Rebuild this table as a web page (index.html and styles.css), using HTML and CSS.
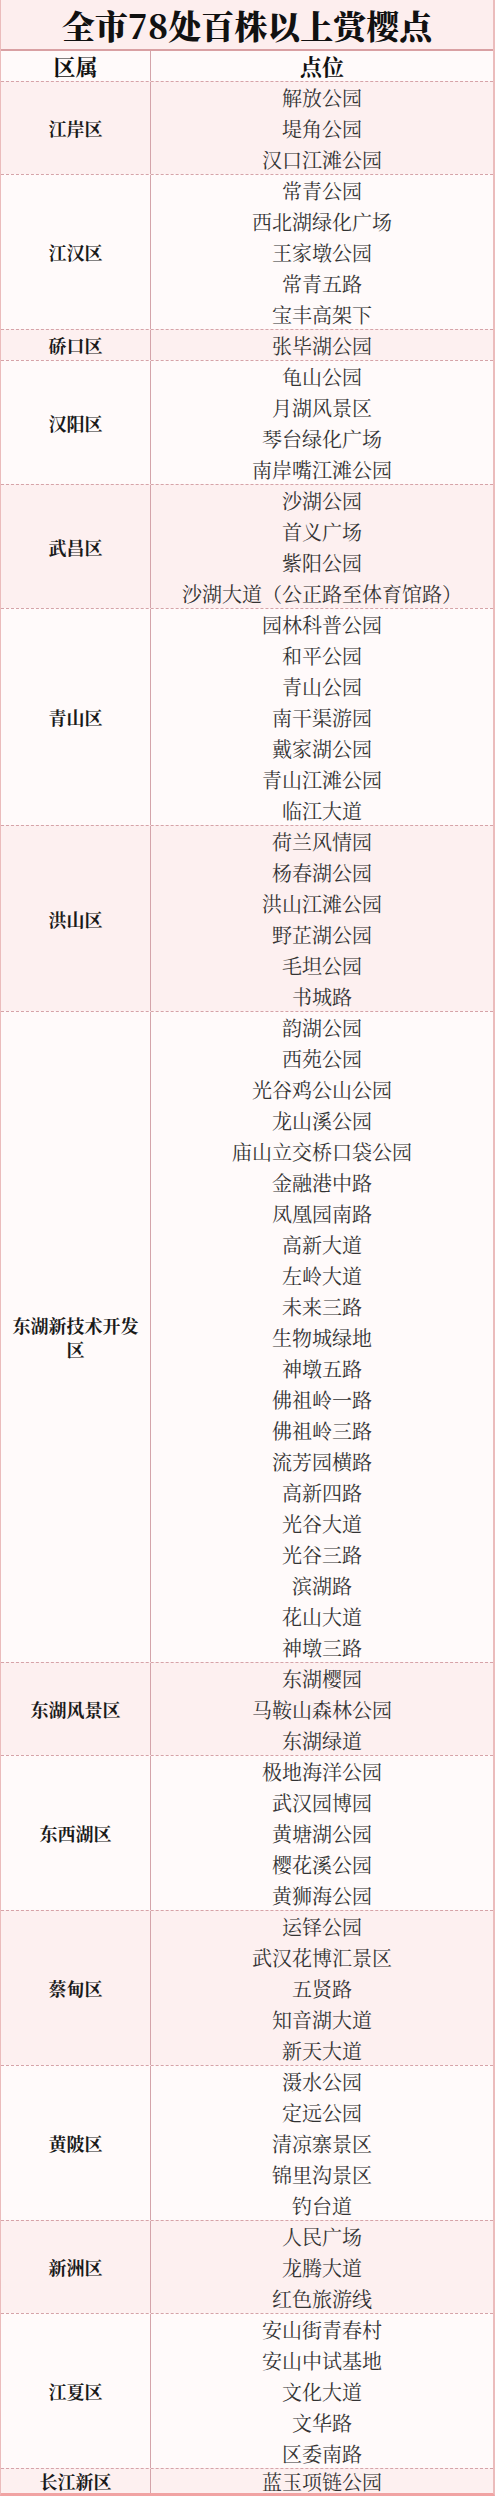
FILE: index.html
```html
<!DOCTYPE html>
<html lang="zh-CN">
<head>
<meta charset="utf-8">
<title>全市78处百株以上赏樱点</title>
<link rel="stylesheet" href="styles.css">
</head>
<body>
<div class="sheet">
  <h1 class="title">全市78处百株以上赏樱点</h1>
  <div class="head">
    <div class="head-cell">区属</div>
    <div class="head-cell">点位</div>
  </div>

  <div class="group pink">
    <div class="district">江岸区</div>
    <ul class="items"><li>解放公园</li><li>堤角公园</li><li>汉口江滩公园</li></ul>
  </div>
  <div class="group white">
    <div class="district">江汉区</div>
    <ul class="items"><li>常青公园</li><li>西北湖绿化广场</li><li>王家墩公园</li><li>常青五路</li><li>宝丰高架下</li></ul>
  </div>
  <div class="group pink">
    <div class="district">硚口区</div>
    <ul class="items"><li>张毕湖公园</li></ul>
  </div>
  <div class="group white">
    <div class="district">汉阳区</div>
    <ul class="items"><li>龟山公园</li><li>月湖风景区</li><li>琴台绿化广场</li><li>南岸嘴江滩公园</li></ul>
  </div>
  <div class="group pink">
    <div class="district">武昌区</div>
    <ul class="items"><li>沙湖公园</li><li>首义广场</li><li>紫阳公园</li><li>沙湖大道（公正路至体育馆路）</li></ul>
  </div>
  <div class="group white">
    <div class="district">青山区</div>
    <ul class="items"><li>园林科普公园</li><li>和平公园</li><li>青山公园</li><li>南干渠游园</li><li>戴家湖公园</li><li>青山江滩公园</li><li>临江大道</li></ul>
  </div>
  <div class="group pink">
    <div class="district">洪山区</div>
    <ul class="items"><li>荷兰风情园</li><li>杨春湖公园</li><li>洪山江滩公园</li><li>野芷湖公园</li><li>毛坦公园</li><li>书城路</li></ul>
  </div>
  <div class="group white">
    <div class="district">东湖新技术开发<br>区</div>
    <ul class="items"><li>韵湖公园</li><li>西苑公园</li><li>光谷鸡公山公园</li><li>龙山溪公园</li><li>庙山立交桥口袋公园</li><li>金融港中路</li><li>凤凰园南路</li><li>高新大道</li><li>左岭大道</li><li>未来三路</li><li>生物城绿地</li><li>神墩五路</li><li>佛祖岭一路</li><li>佛祖岭三路</li><li>流芳园横路</li><li>高新四路</li><li>光谷大道</li><li>光谷三路</li><li>滨湖路</li><li>花山大道</li><li>神墩三路</li></ul>
  </div>
  <div class="group pink">
    <div class="district">东湖风景区</div>
    <ul class="items"><li>东湖樱园</li><li>马鞍山森林公园</li><li>东湖绿道</li></ul>
  </div>
  <div class="group white">
    <div class="district">东西湖区</div>
    <ul class="items"><li>极地海洋公园</li><li>武汉园博园</li><li>黄塘湖公园</li><li>樱花溪公园</li><li>黄狮海公园</li></ul>
  </div>
  <div class="group pink">
    <div class="district">蔡甸区</div>
    <ul class="items"><li>运铎公园</li><li>武汉花博汇景区</li><li>五贤路</li><li>知音湖大道</li><li>新天大道</li></ul>
  </div>
  <div class="group white">
    <div class="district">黄陂区</div>
    <ul class="items"><li>滠水公园</li><li>定远公园</li><li>清凉寨景区</li><li>锦里沟景区</li><li>钓台道</li></ul>
  </div>
  <div class="group pink">
    <div class="district">新洲区</div>
    <ul class="items"><li>人民广场</li><li>龙腾大道</li><li>红色旅游线</li></ul>
  </div>
  <div class="group white">
    <div class="district">江夏区</div>
    <ul class="items"><li>安山街青春村</li><li>安山中试基地</li><li>文化大道</li><li>文华路</li><li>区委南路</li></ul>
  </div>
  <div class="group pink last">
    <div class="district">长江新区</div>
    <ul class="items"><li>蓝玉项链公园</li></ul>
  </div>
</div>
</body>
</html>
```

FILE: styles.css
```css
html, body {
  margin: 0;
  padding: 0;
  background: #fffafa;
}

body {
  font-family: "Noto Serif CJK SC", "Noto Sans CJK SC", "Liberation Serif", serif;
  color: #333;
}

.sheet {
  width: 492px;
  border-left: 1px solid #ebbcbc;
  border-right: 2px solid #ebbcbc;
  border-bottom: 3px solid #f1a3a3;
}

.title {
  margin: 0;
  height: 49px;
  line-height: 49px;
  background: #fdeeee;
  border-bottom: 2px solid #d9a0a3;
  text-align: center;
  font-size: 33px;
  font-weight: 900;
  color: #111;
  letter-spacing: 0;
}

.head {
  display: grid;
  grid-template-columns: 150px 1fr;
  height: 30px;
  background: #fffafa;
}

.head-cell {
  text-align: center;
  line-height: 30px;
  font-size: 22px;
  font-weight: 700;
  color: #111;
}

.head-cell:first-child {
  border-right: 1px solid #d4a4aa;
}

.group {
  display: grid;
  grid-template-columns: 150px 1fr;
  border-top: 1px dashed #d6a3a8;
}

.group.pink {
  background: #fdf0f0;
}

.group.white {
  background: #fffafa;
}

.district {
  display: flex;
  align-items: center;
  justify-content: center;
  text-align: center;
  border-right: 1px solid #d4a4aa;
  font-size: 18px;
  font-weight: 700;
  color: #1a1a1a;
  line-height: 24px;
}

.items {
  list-style: none;
  margin: 0;
  padding: 0;
}

.items li {
  height: 31px;
  line-height: 33px;
  text-align: center;
  font-size: 20px;
  color: #333;
  white-space: nowrap;
}

.items li:first-child {
  height: 30px;
  line-height: 32px;
}

.last .items li {
  height: 24px;
  line-height: 26px;
}

.last .district {
  height: 24px;
  line-height: 26px;
}
```
